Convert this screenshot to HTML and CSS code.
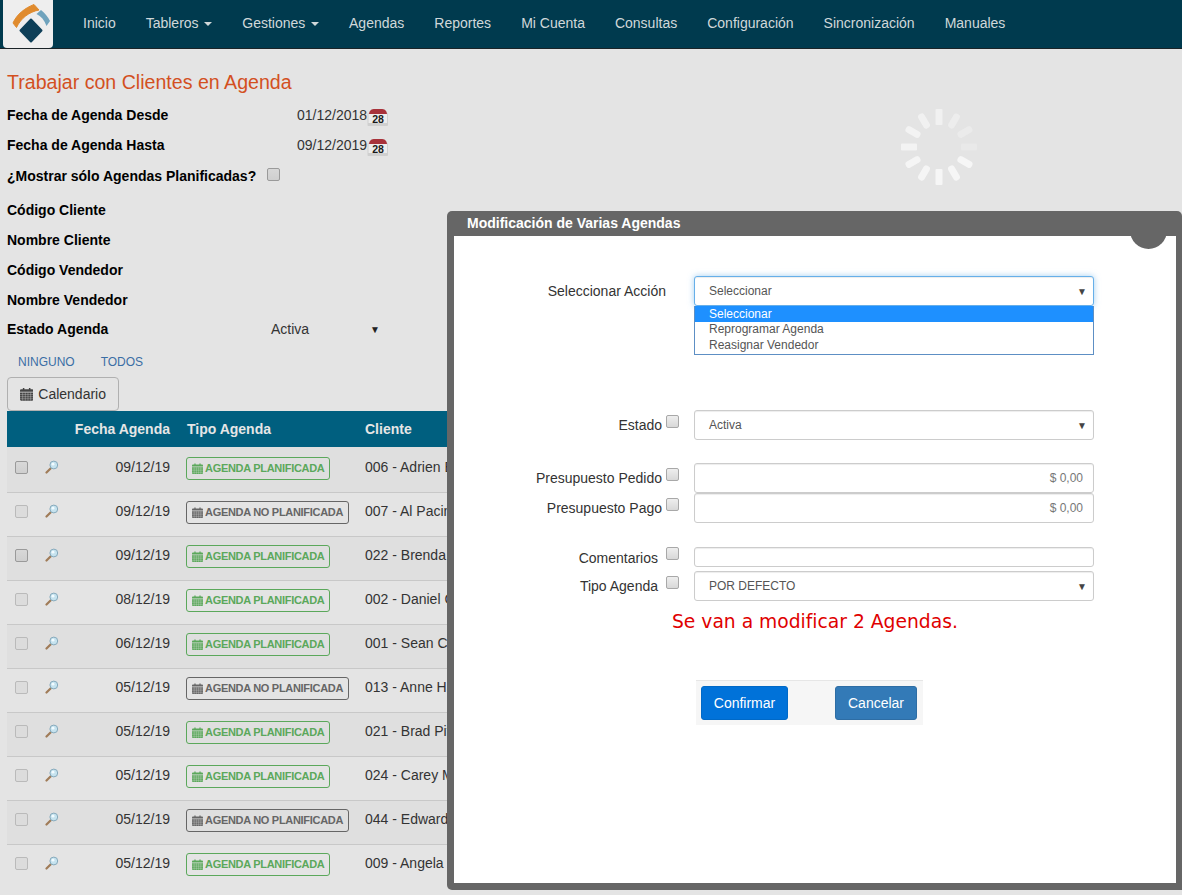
FILE: index.html
```html
<!DOCTYPE html>
<html lang="es">
<head>
<meta charset="utf-8">
<title>Trabajar con Clientes en Agenda</title>
<link rel="stylesheet" href="styles.css">
</head>
<body>
<svg class="defs" width="0" height="0" aria-hidden="true">
  <symbol id="fa-cal" viewBox="0 0 14 14">
    <path fill="currentColor" d="M0 3.2Q0 2 1.2 2H3V.6h1.6V2h4.8V.6H11V2h1.800Q14 2 14 3.200V4.600H0zM0 5.400h14v7.400q0 1.200-1.200 1.200H1.200Q0 14 0 12.800z"/>
    <path stroke="#e4e4e4" stroke-width=".35" fill="none" d="M0 7.600h14M0 9.800h14M0 12h14M2.800 5.400V14M5.600 5.400V14M8.400 5.400V14M11.200 5.400V14"/>
  </symbol>
  <symbol id="lens" viewBox="0 0 14 14">
    <path d="M1.500 12.500 5.800 8.200" stroke="#a07c58" stroke-width="2.200" stroke-linecap="round"/>
    <circle cx="8.800" cy="5" r="3.900" fill="#c6e3ef" stroke="#86a9bb" stroke-width="1"/>
    <circle cx="8" cy="4.200" r="1.400" fill="#f2fbff"/>
  </symbol>
  <symbol id="cal28" viewBox="0 0 22 20">
    <rect x=".5" y="6" width="20.500" height="13" rx="1" fill="#cfcfcf"/>
    <path d="M2 8C2 3 4.500 2 8 2H14C17.500 2 20 3 20 8z" fill="#a8323a"/>
    <rect x="1.500" y="7" width="18.500" height="9" fill="#ececec"/>
  </symbol>
</svg>

<nav class="navbar">
  <a class="brand" href="#">
    <svg width="50" height="48" viewBox="0 0 50 48">
      <path d="M10 23C14 14 22 8 31 4.500L36 10C26 12 18 18 13.500 27.500Z" fill="#e08b2e" stroke="#e08b2e" stroke-linejoin="round"/>
      <path d="M38 10C42 13 45 17 47 21L43.500 26C41.500 20 38 16 33.500 14Z" fill="#6fa3bd"/>
      <path d="M28 19.500 38.500 30.500 28 41.500 17.500 30.500Z" fill="#0e3f58" stroke="#0e3f58" stroke-width="2" stroke-linejoin="round"/>
    </svg>
  </a>
  <ul class="menu">
    <li>Inicio</li>
    <li>Tableros<span class="caret"></span></li>
    <li>Gestiones<span class="caret"></span></li>
    <li>Agendas</li>
    <li>Reportes</li>
    <li>Mi Cuenta</li>
    <li>Consultas</li>
    <li>Configuración</li>
    <li>Sincronización</li>
    <li>Manuales</li>
  </ul>
</nav>

<main class="page">
  <h1 class="title">Trabajar con Clientes en Agenda</h1>
  <div class="filters">
    <div class="frow"><label>Fecha de Agenda Desde</label><span class="fval">01/12/2018</span><svg class="cal28" width="22" height="20"><use href="#cal28"/><text x="11" y="16" text-anchor="middle" class="cal-num">28</text></svg></div>
    <div class="frow"><label>Fecha de Agenda Hasta</label><span class="fval">09/12/2019</span><svg class="cal28" width="22" height="20"><use href="#cal28"/><text x="11" y="16" text-anchor="middle" class="cal-num">28</text></svg></div>
    <div class="frow frow-check"><label>¿Mostrar sólo Agendas Planificadas?</label><span class="chk chk-page"></span></div>
    <div class="frow frow-gap"><label>Código Cliente</label></div>
    <div class="frow"><label>Nombre Cliente</label></div>
    <div class="frow"><label>Código Vendedor</label></div>
    <div class="frow"><label>Nombre Vendedor</label></div>
    <div class="frow frow-estado"><label>Estado Agenda</label><span class="estado">Activa</span><span class="arrow">▼</span></div>
  </div>
  <div class="links"><a href="#">NINGUNO</a><a href="#">TODOS</a></div>
  <button class="btn-cal"><svg width="14" height="14"><use href="#fa-cal"/></svg>Calendario</button>
  <table class="grid">
    <colgroup><col class="c1"><col class="c2"><col class="c3"><col class="c4"><col></colgroup>
    <thead><tr><th></th><th></th><th class="r">Fecha Agenda</th><th>Tipo Agenda</th><th>Cliente</th></tr></thead>
    <tbody>
      <tr><td><span class="chk"></span></td><td><svg class="lens" width="14" height="14"><use href="#lens"/></svg></td><td class="r">09/12/19</td><td><span class="tag tag-g"><svg width="11" height="11"><use href="#fa-cal"/></svg>AGENDA PLANIFICADA</span></td><td>006 - Adrien Brody</td></tr>
      <tr><td><span class="chk chk-off"></span></td><td><svg class="lens" width="14" height="14"><use href="#lens"/></svg></td><td class="r">09/12/19</td><td><span class="tag tag-n"><svg width="11" height="11"><use href="#fa-cal"/></svg>AGENDA NO PLANIFICADA</span></td><td>007 - Al Pacino</td></tr>
      <tr><td><span class="chk"></span></td><td><svg class="lens" width="14" height="14"><use href="#lens"/></svg></td><td class="r">09/12/19</td><td><span class="tag tag-g"><svg width="11" height="11"><use href="#fa-cal"/></svg>AGENDA PLANIFICADA</span></td><td>022 - Brenda Fricker</td></tr>
      <tr><td><span class="chk chk-off"></span></td><td><svg class="lens" width="14" height="14"><use href="#lens"/></svg></td><td class="r">08/12/19</td><td><span class="tag tag-g"><svg width="11" height="11"><use href="#fa-cal"/></svg>AGENDA PLANIFICADA</span></td><td>002 - Daniel Craig</td></tr>
      <tr><td><span class="chk chk-off"></span></td><td><svg class="lens" width="14" height="14"><use href="#lens"/></svg></td><td class="r">06/12/19</td><td><span class="tag tag-g"><svg width="11" height="11"><use href="#fa-cal"/></svg>AGENDA PLANIFICADA</span></td><td>001 - Sean Connery</td></tr>
      <tr><td><span class="chk chk-off"></span></td><td><svg class="lens" width="14" height="14"><use href="#lens"/></svg></td><td class="r">05/12/19</td><td><span class="tag tag-n"><svg width="11" height="11"><use href="#fa-cal"/></svg>AGENDA NO PLANIFICADA</span></td><td>013 - Anne Hathaway</td></tr>
      <tr><td><span class="chk chk-off"></span></td><td><svg class="lens" width="14" height="14"><use href="#lens"/></svg></td><td class="r">05/12/19</td><td><span class="tag tag-g"><svg width="11" height="11"><use href="#fa-cal"/></svg>AGENDA PLANIFICADA</span></td><td>021 - Brad Pitt</td></tr>
      <tr><td><span class="chk chk-off"></span></td><td><svg class="lens" width="14" height="14"><use href="#lens"/></svg></td><td class="r">05/12/19</td><td><span class="tag tag-g"><svg width="11" height="11"><use href="#fa-cal"/></svg>AGENDA PLANIFICADA</span></td><td>024 - Carey Mulligan</td></tr>
      <tr><td><span class="chk chk-off"></span></td><td><svg class="lens" width="14" height="14"><use href="#lens"/></svg></td><td class="r">05/12/19</td><td><span class="tag tag-n"><svg width="11" height="11"><use href="#fa-cal"/></svg>AGENDA NO PLANIFICADA</span></td><td>044 - Edward Norton</td></tr>
      <tr><td><span class="chk chk-off"></span></td><td><svg class="lens" width="14" height="14"><use href="#lens"/></svg></td><td class="r">05/12/19</td><td><span class="tag tag-g"><svg width="11" height="11"><use href="#fa-cal"/></svg>AGENDA PLANIFICADA</span></td><td>009 - Angela Bassett</td></tr>
    </tbody>
  </table>
</main>

<svg class="spinner" width="80" height="80" viewBox="-40 -40 80 80" aria-hidden="true">
  <g fill="#f6f6f6">
    <rect x="-3.500" y="-38" width="7" height="16" rx="1" opacity=".7"/>
    <rect x="-3.500" y="-38" width="7" height="16" rx="3" opacity=".5" transform="rotate(30)"/>
    <rect x="-3.500" y="-38" width="7" height="16" rx="3" opacity=".4" transform="rotate(60)"/>
    <rect x="-3.500" y="-38" width="7" height="16" rx="1" opacity=".25" transform="rotate(90)"/>
    <rect x="-3.500" y="-38" width="7" height="16" rx="3" opacity="1" transform="rotate(120)"/>
    <rect x="-3.500" y="-38" width="7" height="16" rx="3" opacity="1" transform="rotate(150)"/>
    <rect x="-3.500" y="-38" width="7" height="16" rx="1" opacity="1" transform="rotate(180)"/>
    <rect x="-3.500" y="-38" width="7" height="16" rx="3" opacity=".95" transform="rotate(210)"/>
    <rect x="-3.500" y="-38" width="7" height="16" rx="3" opacity=".9" transform="rotate(240)"/>
    <rect x="-3.500" y="-38" width="7" height="16" rx="1" opacity=".85" transform="rotate(270)"/>
    <rect x="-3.500" y="-38" width="7" height="16" rx="3" opacity=".8" transform="rotate(300)"/>
    <rect x="-3.500" y="-38" width="7" height="16" rx="3" opacity=".7" transform="rotate(330)"/>
  </g>
</svg>

<section class="modal">
  <header class="modal-head">Modificación de Varias Agendas</header>
  <span class="modal-close"></span>
  <div class="modal-body">
    <div class="mrow mrow-accion">
      <label class="mlabel">Seleccionar Acción</label>
      <div class="mfield">
        <div class="ctl ctl-focus"><span>Seleccionar</span><span class="arrow-s">▼</span></div>
        <ul class="opts">
          <li class="sel">Seleccionar</li>
          <li>Reprogramar Agenda</li>
          <li>Reasignar Vendedor</li>
        </ul>
      </div>
    </div>
    <div class="mrow mrow-estado">
      <label class="mlabel">Estado<span class="chk chk-m"></span></label>
      <div class="mfield"><div class="ctl"><span>Activa</span><span class="arrow-s">▼</span></div></div>
    </div>
    <div class="mrow mrow-pedido">
      <label class="mlabel">Presupuesto Pedido<span class="chk chk-m"></span></label>
      <div class="mfield"><div class="ctl ctl-num">$ 0,00</div></div>
    </div>
    <div class="mrow">
      <label class="mlabel">Presupuesto Pago<span class="chk chk-m"></span></label>
      <div class="mfield"><div class="ctl ctl-num">$ 0,00</div></div>
    </div>
    <div class="mrow mrow-com">
      <label class="mlabel mlabel-w">Comentarios<span class="chk chk-m"></span></label>
      <div class="mfield"><div class="ctl ctl-short"></div></div>
    </div>
    <div class="mrow mrow-tipo">
      <label class="mlabel mlabel-w">Tipo Agenda<span class="chk chk-m"></span></label>
      <div class="mfield"><div class="ctl"><span>POR DEFECTO</span><span class="arrow-s">▼</span></div></div>
    </div>
    <p class="warn">Se van a modificar 2 Agendas.</p>
    <div class="actions">
      <button class="btn btn-ok">Confirmar</button>
      <button class="btn btn-cancel">Cancelar</button>
    </div>
  </div>
</section>
</body>
</html>
```
FILE: styles.css
```css
* { box-sizing: border-box; }
html, body { margin: 0; height: 895px; overflow: hidden; }
body { background: #e4e4e4; font-family: "Liberation Sans", Arial, sans-serif; font-size: 14px; color: #333; position: relative; }
.defs { position: absolute; }
.cal-num { font: bold 10.500px "Liberation Sans", Arial, sans-serif; fill: #1a1a1a; }

.navbar { height: 49px; background: #003a4e; border-bottom: 1px solid #1a2327; display: flex; }
.brand { width: 50px; height: 48px; margin-left: 3px; background: #eeeeee; border-radius: 0 0 4px 4px; display: block; }
.brand svg { display: block; }
.menu { list-style: none; margin: 0 0 0 15px; padding: 0; display: flex; color: #d0d8da; }
.menu li { padding: 0 15px; line-height: 47px; font-size: 14px; white-space: nowrap; }
.caret { display: inline-block; margin-left: 5.700px; vertical-align: 2px; border-top: 4px solid #d0d8da; border-left: 4px solid transparent; border-right: 4px solid transparent; }

.page { padding: 0 0 0 7px; }
.title { margin: 21px 0 0; font-size: 19.600px; font-weight: 400; line-height: 24px; color: #d3501f; }
.filters { margin-top: 6px; }
.frow { height: 30px; display: flex; align-items: center; color: #000; }
.frow label { font-weight: 700; width: 290px; flex: none; }
.fval { color: #333; }
.cal28 { flex: none; margin-top: 3px; }
.frow-check { margin-top: 1px; }
.frow-check label { width: auto; }
.chk-page { margin: -4px 0 0 11px; }
.frow-gap { margin-top: 4px; }
.frow-estado { margin-top: -1px; }
.frow-estado label { width: 264px; }
.estado { color: #333; width: 99px; }
.arrow { font-size: 10px; color: #222; }
.links { display: flex; gap: 26px; margin: 10px 0 0 11px; font-size: 12px; line-height: 17px; }
.links a { color: #3a6ea5; text-decoration: none; }
.btn-cal { display: flex; align-items: center; gap: 5px; margin-top: 6px; height: 34px; width: 112px; padding: 0 12px; background: #e4e4e4; border: 1px solid #b0b0b0; border-radius: 4px; font: 14px "Liberation Sans", Arial, sans-serif; color: #333; }
.btn-cal svg { color: #444; }

.grid { width: 1175px; table-layout: fixed; border-collapse: collapse; }
.c1 { width: 30px; }
.c2 { width: 30px; }
.c3 { width: 118px; }
.c4 { width: 180px; }
.grid th { height: 36px; background: #005f7f; color: #e6e6e6; text-align: left; font-size: 14px; padding: 0; }
.grid td { height: 44px; padding: 0 0 6px; border-top: 1px solid #c8c8c8; }
.grid tbody tr:first-child td { border-top: 0; height: 45px; padding-bottom: 4px; }
.grid tbody tr:nth-child(odd) td { background: #dfdfdf; }
.grid th.r, .grid td.r { text-align: right; padding-right: 15px; }
.grid td:nth-child(4) { padding-left: 1px; }
.grid th:nth-child(4) { padding-left: 2px; }
.grid th:nth-child(5), .grid td:nth-child(5) { white-space: nowrap; overflow: hidden; }
.grid td:nth-child(1) { padding-left: 8px; }
.grid td:nth-child(2) { padding-left: 7.500px; }
.lens { display: block; }
.chk { display: inline-block; width: 13px; height: 13px; border: 1px solid #9a9a9a; border-radius: 2px; background: linear-gradient(#d8d8d8, #cfcfcf); }
.grid .chk { display: block; }
.chk-off { border-color: #bababa; background: #dcdcdc; }
.tag { display: inline-flex; align-items: center; gap: 2px; height: 23px; margin-top: 2px; padding: 0 5px; border: 1px solid; border-radius: 3px; font-size: 11px; font-weight: 700; letter-spacing: -.3px; white-space: nowrap; vertical-align: middle; }
.tag-g { color: #5ba85b; border-color: #5ba85b; }
.tag-n { color: #666; border-color: #666; }

.spinner { position: absolute; left: 899px; top: 107px; }

.modal { position: absolute; left: 447px; top: 211px; width: 735px; height: 679px; background: #666; border-radius: 5px 5px 0 5px; padding: 0 6px 7px 7px; display: flex; flex-direction: column; }
.modal-head { height: 25px; flex: none; padding-left: 13px; line-height: 25px; font-size: 14px; font-weight: 700; color: #fff; }
.modal-close { position: absolute; left: 683px; top: 7px; width: 37px; height: 31px; border-radius: 0 0 19px 19px; background: #666; }
.modal-body { flex: 1; background: #fff; padding-top: 40px; }

.mrow { display: flex; align-items: flex-start; }
.mlabel { width: 225px; margin-right: 15px; flex: none; text-align: right; font-size: 14px; color: #333; line-height: 30px; white-space: nowrap; }
.mfield { width: 400px; }
.mrow-accion .mlabel { width: 212px; margin-right: 28px; }
.mlabel .chk { margin-left: 4px; vertical-align: 2.500px; border-color: #a8a8a8; background: linear-gradient(#eee, #d8d8d8); }
.mlabel-w .chk { margin-left: 8px; }
.ctl { height: 30px; display: flex; align-items: center; justify-content: space-between; padding: 0 6px 0 14px; border: 1px solid #ccc; border-radius: 3px; background: #fff; font-size: 12px; color: #555; box-shadow: inset 0 1px 1px rgba(0,0,0,.075); }
.ctl-focus { border-color: #66afe9; box-shadow: inset 0 1px 1px rgba(0,0,0,.075), 0 0 6px rgba(102,175,233,.6); }
.ctl-num { justify-content: flex-end; padding-right: 10px; color: #777; }
.ctl-short { height: 20px; }
.arrow-s { font-size: 10px; color: #444; }
.opts { list-style: none; margin: 0; padding: 0; border: 1px solid #5d8fc4; border-top: 0; height: 49px; font-size: 12px; color: #555; }
.opts li { height: 15.500px; line-height: 15px; padding-left: 14px; }
.opts .sel { background: #1e90ff; color: #fff; height: 16px; line-height: 16px; }
.mrow-estado { margin-top: 55px; }
.mrow-pedido { margin-top: 23px; }
.mrow-com { margin-top: 24px; height: 20px; }
.mrow-com .mlabel { line-height: 19px; height: 20px; }
.mrow-tipo { margin-top: 4px; }
.warn { margin: 10px 0 0 218px; font: 18.720px/22px "DejaVu Sans", Verdana, sans-serif; color: #e00000; }
.actions { width: 227px; height: 45px; margin: 47px 0 0 242px; padding: 5px 6px 5px 5px; background: #f6f6f6; border-top: 1px solid #e6e6e6; display: flex; justify-content: space-between; }
.btn { height: 34px; border: 1px solid; border-radius: 3px; font: 14px "Liberation Sans", Arial, sans-serif; color: #fff; }
.btn-ok { width: 87px; background: #0072d9; border-color: #0069c7; }
.btn-cancel { width: 82px; background: #337ab7; border-color: #2e6da4; }
```
